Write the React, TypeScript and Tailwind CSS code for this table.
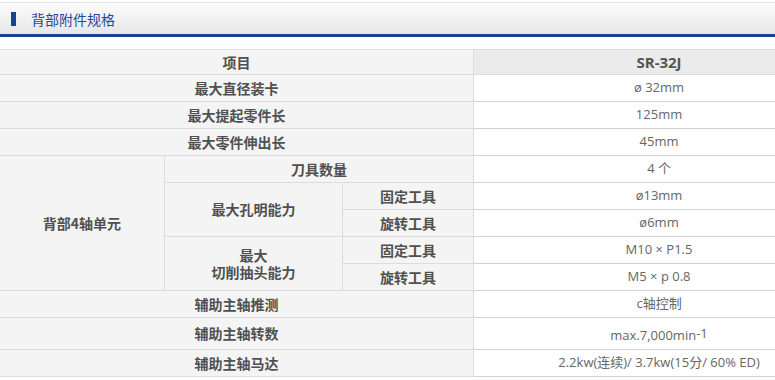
const labelFont = "[font-family:'Noto_Sans_CJK_SC',sans-serif]"

type Row = {
  label: string
  value: React.ReactNode
}

const topRows: Row[] = [
  { label: '最大直径装卡', value: 'ø 32mm' },
  { label: '最大提起零件长', value: '125mm' },
  { label: '最大零件伸出长', value: '45mm' },
]

const bottomRows: Row[] = [
  { label: '辅助主轴推测', value: 'c轴控制' },
  {
    label: '辅助主轴转数',
    value: (
      <>
        max.7,000min<sup className="text-[13px] relative -top-[2px]">-1</sup>
      </>
    ),
  },
  { label: '辅助主轴马达', value: '2.2kw(连续)/ 3.7kw(15分/ 60% ED)' },
]

// label cells are grey, values white
const lbl = `bg-[#f4f4f4] border-b border-r border-[#dcdcdc] text-[14px] font-bold text-[#505050] text-center align-middle p-0 ${labelFont}`
const val =
  "bg-white border-b border-[#d2d2d2] text-[13px] text-[#666] text-center align-middle p-0 [font-family:'Open_Sans','Noto_Sans_CJK_SC',sans-serif]"

export default function App() {
  return (
    <div className="w-[775px] h-[380px] overflow-hidden bg-white">
      {/* Section title */}
      <div className="pt-[2px]">
        <div className="h-[32px] border-t border-[#e2e2e2] bg-gradient-to-b from-[#fcfcfc] to-[#e7e7e7] flex items-center">
          <span className="ml-[11px] w-[5px] h-[14px] bg-[#1b3f93]" />
          <span className={`ml-[15px] text-[14px] text-[#26479a] leading-none ${labelFont}`}>背部附件规格</span>
        </div>
        <div className="h-[3px] bg-[#1b3f93]" />
      </div>

      {/* Spec table */}
      <table className="mt-[12px] w-[844px] border-separate border-spacing-0 table-fixed">
        <colgroup>
          <col className="w-[165px]" />
          <col className="w-[178px]" />
          <col className="w-[131px]" />
          <col className="w-[370px]" />
        </colgroup>
        <tbody>
          <tr>
            <td colSpan={3} className={`${lbl} bg-[#ebebeb] border-t h-[26px]`}>项目</td>
            <td className="bg-[#ebebeb] border-t border-b border-[#dcdcdc] h-[26px] text-center align-middle p-0 text-[15px] font-bold text-[#555] [font-family:'Open_Sans',sans-serif]">
              SR-32J
            </td>
          </tr>
          {topRows.map((r) => (
            <tr key={r.label}>
              <td colSpan={3} className={`${lbl} h-[27px]`}>{r.label}</td>
              <td className={`${val} h-[27px]`}>{r.value}</td>
            </tr>
          ))}
          <tr>
            <td rowSpan={5} className={lbl}>背部4轴单元</td>
            <td colSpan={2} className={`${lbl} h-[27px]`}>刀具数量</td>
            <td className={`${val} h-[27px]`}>4 个</td>
          </tr>
          <tr>
            <td rowSpan={2} className={lbl}>最大孔明能力</td>
            <td className={`${lbl} h-[27px]`}>固定工具</td>
            <td className={`${val} h-[27px]`}>ø13mm</td>
          </tr>
          <tr>
            <td className={`${lbl} h-[27px]`}>旋转工具</td>
            <td className={`${val} h-[27px]`}>ø6mm</td>
          </tr>
          <tr>
            <td rowSpan={2} className={`${lbl} leading-[17px]`}>
              最大
              <br />
              切削抽头能力
            </td>
            <td className={`${lbl} h-[27px]`}>固定工具</td>
            <td className={`${val} h-[27px]`}>M10 × P1.5</td>
          </tr>
          <tr>
            <td className={`${lbl} h-[27px]`}>旋转工具</td>
            <td className={`${val} h-[27px]`}>M5 × p 0.8</td>
          </tr>
          {bottomRows.map((r, i) => (
            <tr key={r.label}>
              <td colSpan={3} className={`${lbl} ${i === 1 ? 'h-[32px]' : 'h-[27px]'}`}>{r.label}</td>
              <td className={`${val} ${i === 1 ? 'h-[32px] pt-[4px]' : 'h-[27px]'}`}>{r.value}</td>
            </tr>
          ))}
        </tbody>
      </table>
    </div>
  )
}
